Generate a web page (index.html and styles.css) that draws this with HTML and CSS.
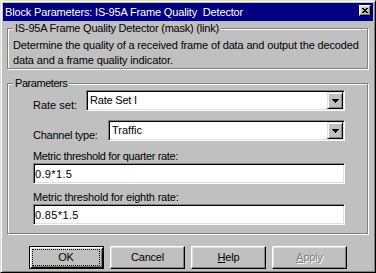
FILE: index.html
```html
<!DOCTYPE html>
<html lang="en">
<head>
<meta charset="utf-8">
<title>Block Parameters: IS-95A Frame Quality Detector</title>
<link rel="stylesheet" href="styles.css">
</head>
<body>
<div class="window">
  <div class="titlebar">
    <span class="title">Block Parameters: IS-95A Frame Quality  Detector</span>
    <span class="close" aria-label="Close">
      <svg viewBox="0 0 6 5" shape-rendering="crispEdges"><path d="M0 0h2v1H0zM4 0h2v1H4zM1 1h4v1H1zM2 2h2v1H2zM1 3h4v1H1zM0 4h2v1H0zM4 4h2v1H4z" fill="#000"/></svg>
    </span>
  </div>

  <fieldset class="group desc">
    <legend>IS-95A Frame Quality Detector (mask) (link)</legend>
    <p>Determine the quality of a received frame of data and output the decoded<br>data and a frame quality indicator.</p>
  </fieldset>

  <fieldset class="group params">
    <legend class="legend-params">Parameters</legend>
    <div class="content">
      <div class="row">
        <label class="lbl-rate">Rate set:</label>
        <div class="combo"><span class="value">Rate Set I</span><span class="drop"><svg viewBox="0 0 7 4" shape-rendering="crispEdges"><path d="M0 0h7v1H0zM1 1h5v1H1zM2 2h3v1H2zM3 3h1v1H3z" fill="#000"/></svg></span></div>
      </div>
      <div class="row">
        <label class="lbl-chan">Channel type:</label>
        <div class="combo"><span class="value chan">Traffic</span><span class="drop"><svg viewBox="0 0 7 4" shape-rendering="crispEdges"><path d="M0 0h7v1H0zM1 1h5v1H1zM2 2h3v1H2zM3 3h1v1H3z" fill="#000"/></svg></span></div>
      </div>
      <div class="field">
        <label class="lbl-quarter">Metric threshold for quarter rate:</label>
        <input class="edit" type="text" value="0.9*1.5">
      </div>
      <div class="field">
        <label>Metric threshold for eighth rate:</label>
        <input class="edit" type="text" value="0.85*1.5">
      </div>
    </div>
  </fieldset>

  <div class="buttons">
    <button class="btn default"><span class="focus">OK</span></button>
    <button class="btn">Cancel</button>
    <button class="btn"><u>H</u>elp</button>
    <button class="btn disabled"><u>A</u>pply</button>
  </div>
</div>
</body>
</html>
```

FILE: styles.css
```css
* { box-sizing: border-box; }
html, body { margin: 0; padding: 0; }
body {
  background: #c0c0c0;
  font-family: "Liberation Sans", Arial, sans-serif;
  font-size: 11px;
  line-height: 13px;
  letter-spacing: -0.2px;
  color: #000;
  overflow: hidden;
}
.window {
  width: 376px;
  height: 273px;
  border: 1px solid;
  border-color: #dfdfdf #000 #000 #dfdfdf;
  box-shadow: inset 1px 1px 0 #fff, inset -1px -1px 0 #808080;
  padding: 2px;
  display: flex;
  flex-direction: column;
  background: #c0c0c0;
}
.titlebar {
  height: 18px;
  flex: none;
  background: #000080;
  color: #fff;
  display: flex;
  align-items: flex-start;
  justify-content: space-between;
  padding-left: 2px;
}
.title { line-height: 18px; white-space: pre; letter-spacing: -0.16px; }
.close {
  width: 12px;
  height: 11px;
  margin: 2px 2px 0 0;
  background: #c0c0c0;
  border: 1px solid;
  border-color: #fff #000 #000 #fff;
  box-shadow: inset -1px -1px 0 #808080, inset 1px 1px 0 #dfdfdf;
  display: flex;
  align-items: center;
  justify-content: center;
}
.close svg { width: 6px; height: 5px; display: block; }

.group {
  margin: 1px 5px 0 4px;
  padding: 3px 0 0 5px;
  border: 1px solid #808080;
  box-shadow: inset 1px 1px 0 #fff, 1px 1px 0 #fff;
  min-width: 0;
}
.group legend {
  padding: 0 2px;
  line-height: 13px;
  background: #c0c0c0;
  letter-spacing: -0.22px;
}
.group .legend-params { letter-spacing: -0.45px; }
.desc p { margin: 0; line-height: 15px; white-space: nowrap; letter-spacing: -0.15px; }

.params { margin-top: 8px; padding: 0 22px 8px 5px; }
.params .content { margin-left: 20px; display: flex; flex-direction: column; }

.row { display: flex; align-items: flex-start; gap: 11px; margin-bottom: 8px; }
.row label { padding-top: 9px; white-space: nowrap; }
.lbl-rate { width: 42px; letter-spacing: 0; }
.lbl-chan { width: 64px; letter-spacing: -0.25px; }
.lbl-quarter { letter-spacing: -0.36px; }

.combo {
  flex: 1;
  height: 21px;
  display: flex;
  align-items: center;
  background: #fff;
  border: 1px solid;
  border-color: #808080 #fff #fff #808080;
  box-shadow: inset 1px 1px 0 #000, inset -1px -1px 0 #dfdfdf;
  padding: 1px;
}
.value { flex: 1; padding-left: 2px; }
.value.chan { letter-spacing: 0; }
.drop {
  width: 16px;
  height: 17px;
  background: #c0c0c0;
  border: 1px solid;
  border-color: #dfdfdf #000 #000 #dfdfdf;
  box-shadow: inset 1px 1px 0 #fff, inset -1px -1px 0 #808080;
  display: flex;
  align-items: center;
  justify-content: center;
}
.drop svg { width: 7px; height: 4px; display: block; }

.field { display: flex; flex-direction: column; }
.field + .field { margin-top: 7px; }
.edit {
  width: 100%;
  height: 21px;
  margin: 0;
  font: inherit;
  color: #000;
  background: #fff;
  border: 1px solid;
  border-color: #808080 #fff #fff #808080;
  box-shadow: inset 1px 1px 0 #000, inset -1px -1px 0 #dfdfdf;
  padding: 0 1px;
  outline: none;
  letter-spacing: 0.35px;
}

.buttons { display: flex; gap: 6px; margin: 12px 0 0 26px; }
.btn {
  width: 75px;
  height: 23px;
  font: inherit;
  letter-spacing: -0.2px;
  color: #000;
  background: #c0c0c0;
  border: 1px solid;
  border-color: #fff #000 #000 #fff;
  box-shadow: inset -1px -1px 0 #808080, inset 1px 1px 0 #dfdfdf;
  padding: 0;
}
.btn.default {
  border-color: #000;
  box-shadow: inset 1px 1px 0 #fff, inset -1px -1px 0 #000, inset 2px 2px 0 #dfdfdf, inset -2px -2px 0 #808080;
  padding: 2px 3px 2px 2px;
}
.focus {
  display: flex;
  height: 100%;
  align-items: center;
  justify-content: center;
  border: 1px dotted #000;
}
.btn.disabled { color: #808080; text-shadow: 1px 1px 0 #fff; }
```
